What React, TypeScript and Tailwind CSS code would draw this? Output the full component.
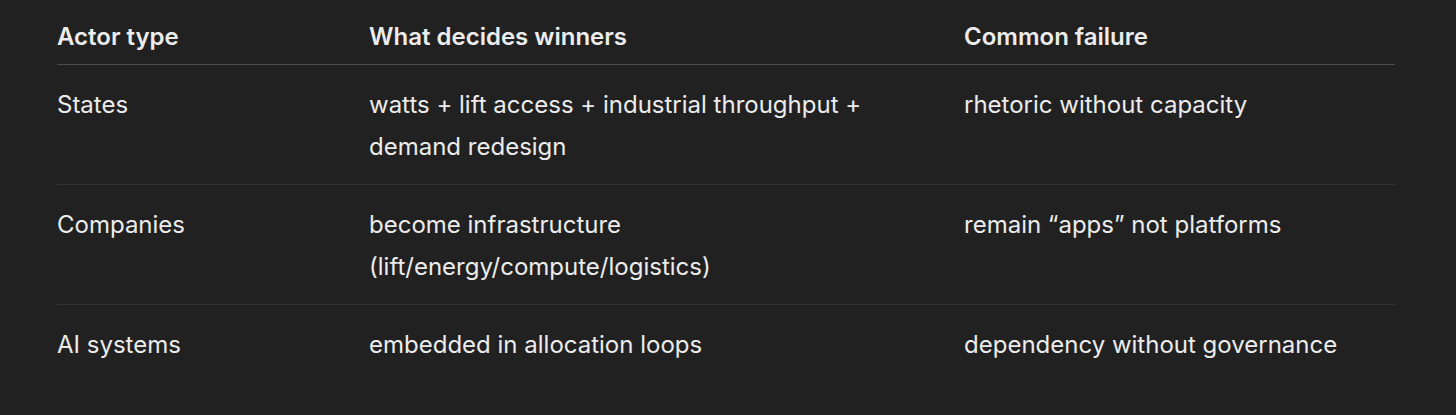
import React from 'react';

const rows = [
  {
    actor: 'States',
    decides: 'watts + lift access + industrial throughput + demand redesign',
    failure: 'rhetoric without capacity',
  },
  {
    actor: 'Companies',
    decides: 'become infrastructure (lift/energy/compute/logistics)',
    failure: 'remain \u201capps\u201d not platforms',
  },
  {
    actor: 'AI systems',
    decides: 'embedded in allocation loops',
    failure: 'dependency without governance',
  },
];

const cols = 'grid grid-cols-[312px_595px_431px]';

export default function App() {
  return (
    <div className="w-[1456px] h-[415px] bg-[#212121] text-[#ececec] font-['Inter',sans-serif] text-[24px] leading-[42px] pl-[57px] overflow-hidden">
      <div className="w-[1338px]">
        {/* Header */}
        <div className={`${cols} pt-[16px] pb-[6px] border-b border-[#4d4d4d] font-semibold`}>
          <div>Actor type</div>
          <div>What decides winners</div>
          <div>Common failure</div>
        </div>

        {/* Body rows */}
        {rows.map((row, i) => (
          <div
            key={row.actor}
            className={`${cols} pt-[19px] pb-[16px] ${i < rows.length - 1 ? 'border-b border-[#333333]' : ''}`}
          >
            <div className="pr-4">{row.actor}</div>
            <div className="pr-[90px]">{row.decides}</div>
            <div className="pr-4">{row.failure}</div>
          </div>
        ))}
      </div>
    </div>
  );
}
